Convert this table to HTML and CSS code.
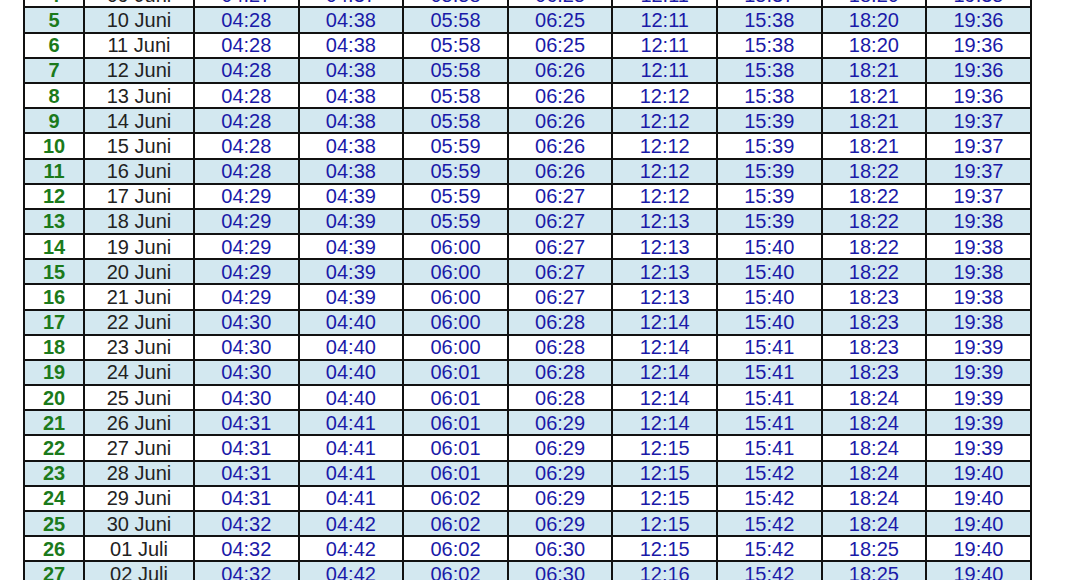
FILE: index.html
```html
<!DOCTYPE html>
<html>
<head>
<meta charset="utf-8">
<link rel="stylesheet" href="styles.css">
</head>
<body>
<table class="sched">
<colgroup>
<col class="c-no"><col class="c-date"><col class="c-t"><col class="c-t"><col class="c-t"><col class="c-t"><col class="c-t"><col class="c-t"><col class="c-t"><col class="c-t">
</colgroup>
<tbody>
<tr><td class="no">4</td><td class="dt">09 Juni</td><td>04:27</td><td>04:37</td><td>05:58</td><td>06:25</td><td>12:11</td><td>15:37</td><td>18:20</td><td>19:35</td></tr>
<tr class="alt"><td class="no">5</td><td class="dt">10 Juni</td><td>04:28</td><td>04:38</td><td>05:58</td><td>06:25</td><td>12:11</td><td>15:38</td><td>18:20</td><td>19:36</td></tr>
<tr><td class="no">6</td><td class="dt">11 Juni</td><td>04:28</td><td>04:38</td><td>05:58</td><td>06:25</td><td>12:11</td><td>15:38</td><td>18:20</td><td>19:36</td></tr>
<tr class="alt"><td class="no">7</td><td class="dt">12 Juni</td><td>04:28</td><td>04:38</td><td>05:58</td><td>06:26</td><td>12:11</td><td>15:38</td><td>18:21</td><td>19:36</td></tr>
<tr><td class="no">8</td><td class="dt">13 Juni</td><td>04:28</td><td>04:38</td><td>05:58</td><td>06:26</td><td>12:12</td><td>15:38</td><td>18:21</td><td>19:36</td></tr>
<tr class="alt"><td class="no">9</td><td class="dt">14 Juni</td><td>04:28</td><td>04:38</td><td>05:58</td><td>06:26</td><td>12:12</td><td>15:39</td><td>18:21</td><td>19:37</td></tr>
<tr><td class="no">10</td><td class="dt">15 Juni</td><td>04:28</td><td>04:38</td><td>05:59</td><td>06:26</td><td>12:12</td><td>15:39</td><td>18:21</td><td>19:37</td></tr>
<tr class="alt"><td class="no">11</td><td class="dt">16 Juni</td><td>04:28</td><td>04:38</td><td>05:59</td><td>06:26</td><td>12:12</td><td>15:39</td><td>18:22</td><td>19:37</td></tr>
<tr><td class="no">12</td><td class="dt">17 Juni</td><td>04:29</td><td>04:39</td><td>05:59</td><td>06:27</td><td>12:12</td><td>15:39</td><td>18:22</td><td>19:37</td></tr>
<tr class="alt"><td class="no">13</td><td class="dt">18 Juni</td><td>04:29</td><td>04:39</td><td>05:59</td><td>06:27</td><td>12:13</td><td>15:39</td><td>18:22</td><td>19:38</td></tr>
<tr><td class="no">14</td><td class="dt">19 Juni</td><td>04:29</td><td>04:39</td><td>06:00</td><td>06:27</td><td>12:13</td><td>15:40</td><td>18:22</td><td>19:38</td></tr>
<tr class="alt"><td class="no">15</td><td class="dt">20 Juni</td><td>04:29</td><td>04:39</td><td>06:00</td><td>06:27</td><td>12:13</td><td>15:40</td><td>18:22</td><td>19:38</td></tr>
<tr><td class="no">16</td><td class="dt">21 Juni</td><td>04:29</td><td>04:39</td><td>06:00</td><td>06:27</td><td>12:13</td><td>15:40</td><td>18:23</td><td>19:38</td></tr>
<tr class="alt"><td class="no">17</td><td class="dt">22 Juni</td><td>04:30</td><td>04:40</td><td>06:00</td><td>06:28</td><td>12:14</td><td>15:40</td><td>18:23</td><td>19:38</td></tr>
<tr><td class="no">18</td><td class="dt">23 Juni</td><td>04:30</td><td>04:40</td><td>06:00</td><td>06:28</td><td>12:14</td><td>15:41</td><td>18:23</td><td>19:39</td></tr>
<tr class="alt"><td class="no">19</td><td class="dt">24 Juni</td><td>04:30</td><td>04:40</td><td>06:01</td><td>06:28</td><td>12:14</td><td>15:41</td><td>18:23</td><td>19:39</td></tr>
<tr><td class="no">20</td><td class="dt">25 Juni</td><td>04:30</td><td>04:40</td><td>06:01</td><td>06:28</td><td>12:14</td><td>15:41</td><td>18:24</td><td>19:39</td></tr>
<tr class="alt"><td class="no">21</td><td class="dt">26 Juni</td><td>04:31</td><td>04:41</td><td>06:01</td><td>06:29</td><td>12:14</td><td>15:41</td><td>18:24</td><td>19:39</td></tr>
<tr><td class="no">22</td><td class="dt">27 Juni</td><td>04:31</td><td>04:41</td><td>06:01</td><td>06:29</td><td>12:15</td><td>15:41</td><td>18:24</td><td>19:39</td></tr>
<tr class="alt"><td class="no">23</td><td class="dt">28 Juni</td><td>04:31</td><td>04:41</td><td>06:01</td><td>06:29</td><td>12:15</td><td>15:42</td><td>18:24</td><td>19:40</td></tr>
<tr><td class="no">24</td><td class="dt">29 Juni</td><td>04:31</td><td>04:41</td><td>06:02</td><td>06:29</td><td>12:15</td><td>15:42</td><td>18:24</td><td>19:40</td></tr>
<tr class="alt"><td class="no">25</td><td class="dt">30 Juni</td><td>04:32</td><td>04:42</td><td>06:02</td><td>06:29</td><td>12:15</td><td>15:42</td><td>18:24</td><td>19:40</td></tr>
<tr><td class="no">26</td><td class="dt">01 Juli</td><td>04:32</td><td>04:42</td><td>06:02</td><td>06:30</td><td>12:15</td><td>15:42</td><td>18:25</td><td>19:40</td></tr>
<tr class="alt"><td class="no">27</td><td class="dt">02 Juli</td><td>04:32</td><td>04:42</td><td>06:02</td><td>06:30</td><td>12:16</td><td>15:42</td><td>18:25</td><td>19:40</td></tr>
</tbody>
</table>
</body>
</html>
```
FILE: styles.css
```css
html, body {
  margin: 0;
  padding: 0;
  background: #ffffff;
  overflow: hidden;
}
body {
  font-family: "Liberation Sans", Arial, sans-serif;
}
.sched {
  border-collapse: collapse;
  table-layout: fixed;
  width: 1007px;
  margin-left: 23px;
  margin-top: -18.7px;
  font-size: 20px;
}
.c-no { width: 60px; }
.c-date { width: 110px; }
.c-t { width: 104.6px; }
.sched td {
  border: 2px solid #111111;
  height: 25.18px;
  padding: 0;
  box-sizing: border-box;
  text-align: center;
  vertical-align: middle;
  line-height: 20px;
  color: #1a1aa8;
  white-space: nowrap;
}
.sched tr.alt td {
  background: #d3e8f0;
}
.sched td.no {
  color: #1b7a1b;
  font-weight: bold;
}
.sched td.dt {
  color: #222222;
}
```
